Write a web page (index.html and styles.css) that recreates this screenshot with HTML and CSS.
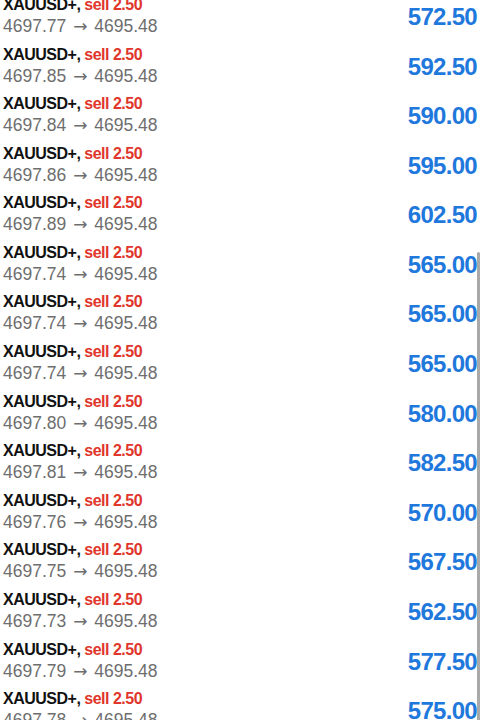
FILE: index.html
```html
<!DOCTYPE html>
<html>
<head>
    <meta charset="utf-8">
    <meta name="viewport" content="width=device-width, initial-scale=1">
    <title>Deals</title>
    <link rel="stylesheet" href="styles.css">
</head>
<body>
    <!-- closed deals, scrolled part way down -->
    <div class="deals">
        <div class="deal">
            <div class="info">
                <p class="title">XAUUSD+, <span class="side">sell 2.50</span></p>
                <p class="prices">4697.77 <span class="arrow">&rarr;</span> 4695.48</p>
            </div>
            <span class="profit">572.50</span>
        </div>
        <div class="deal">
            <div class="info">
                <p class="title">XAUUSD+, <span class="side">sell 2.50</span></p>
                <p class="prices">4697.85 <span class="arrow">&rarr;</span> 4695.48</p>
            </div>
            <span class="profit">592.50</span>
        </div>
        <div class="deal">
            <div class="info">
                <p class="title">XAUUSD+, <span class="side">sell 2.50</span></p>
                <p class="prices">4697.84 <span class="arrow">&rarr;</span> 4695.48</p>
            </div>
            <span class="profit">590.00</span>
        </div>
        <div class="deal">
            <div class="info">
                <p class="title">XAUUSD+, <span class="side">sell 2.50</span></p>
                <p class="prices">4697.86 <span class="arrow">&rarr;</span> 4695.48</p>
            </div>
            <span class="profit">595.00</span>
        </div>
        <div class="deal">
            <div class="info">
                <p class="title">XAUUSD+, <span class="side">sell 2.50</span></p>
                <p class="prices">4697.89 <span class="arrow">&rarr;</span> 4695.48</p>
            </div>
            <span class="profit">602.50</span>
        </div>
        <div class="deal">
            <div class="info">
                <p class="title">XAUUSD+, <span class="side">sell 2.50</span></p>
                <p class="prices">4697.74 <span class="arrow">&rarr;</span> 4695.48</p>
            </div>
            <span class="profit">565.00</span>
        </div>
        <div class="deal">
            <div class="info">
                <p class="title">XAUUSD+, <span class="side">sell 2.50</span></p>
                <p class="prices">4697.74 <span class="arrow">&rarr;</span> 4695.48</p>
            </div>
            <span class="profit">565.00</span>
        </div>
        <div class="deal">
            <div class="info">
                <p class="title">XAUUSD+, <span class="side">sell 2.50</span></p>
                <p class="prices">4697.74 <span class="arrow">&rarr;</span> 4695.48</p>
            </div>
            <span class="profit">565.00</span>
        </div>
        <div class="deal">
            <div class="info">
                <p class="title">XAUUSD+, <span class="side">sell 2.50</span></p>
                <p class="prices">4697.80 <span class="arrow">&rarr;</span> 4695.48</p>
            </div>
            <span class="profit">580.00</span>
        </div>
        <div class="deal">
            <div class="info">
                <p class="title">XAUUSD+, <span class="side">sell 2.50</span></p>
                <p class="prices">4697.81 <span class="arrow">&rarr;</span> 4695.48</p>
            </div>
            <span class="profit">582.50</span>
        </div>
        <div class="deal">
            <div class="info">
                <p class="title">XAUUSD+, <span class="side">sell 2.50</span></p>
                <p class="prices">4697.76 <span class="arrow">&rarr;</span> 4695.48</p>
            </div>
            <span class="profit">570.00</span>
        </div>
        <div class="deal">
            <div class="info">
                <p class="title">XAUUSD+, <span class="side">sell 2.50</span></p>
                <p class="prices">4697.75 <span class="arrow">&rarr;</span> 4695.48</p>
            </div>
            <span class="profit">567.50</span>
        </div>
        <div class="deal">
            <div class="info">
                <p class="title">XAUUSD+, <span class="side">sell 2.50</span></p>
                <p class="prices">4697.73 <span class="arrow">&rarr;</span> 4695.48</p>
            </div>
            <span class="profit">562.50</span>
        </div>
        <div class="deal">
            <div class="info">
                <p class="title">XAUUSD+, <span class="side">sell 2.50</span></p>
                <p class="prices">4697.79 <span class="arrow">&rarr;</span> 4695.48</p>
            </div>
            <span class="profit">577.50</span>
        </div>
        <div class="deal">
            <div class="info">
                <p class="title">XAUUSD+, <span class="side">sell 2.50</span></p>
                <p class="prices">4697.78 <span class="arrow">&rarr;</span> 4695.48</p>
            </div>
            <span class="profit">575.00</span>
        </div>
    </div>

    <!-- scroll indicator -->
    <div class="scroll_bar"></div>
</body>
</html>
```

FILE: styles.css
```css
:root {
    --ink:   #111111;
    --red:   #e0362c;
    --grey:  #6e6e6e;
    --blue:  #1f78dc;
    --thumb: #a9a9a9;
}

html, body {
    height: 100%;
    overflow: hidden;
}

body {
    margin: 0;
    background-color: #ffffff;
    font-family: "Liberation Sans", Arial, sans-serif;
}

p {
    margin: 0;
}

.deals {
    margin-top: -7.9px;
}

.deal {
    height: 49.6px;
    padding: 0 6px 0 3px;

    display: flex;
    align-items: center;
    justify-content: space-between;
}

.title {
    font-size: 16px;
    font-weight: bold;
    letter-spacing: -0.5px;
    line-height: 18px;
    color: var( --ink );
}

.side {
    color: var( --red );
}

.prices {
    font-size: 17.5px;
    line-height: 24px;
    color: var( --grey );
}

.arrow {
    margin: 0 2px;
    font-family: "DejaVu Sans", sans-serif;
    font-size: 17px;
}

.profit {
    font-size: 24px;
    font-weight: bold;
    letter-spacing: -0.7px;
    color: var( --blue );
}

.scroll_bar {
    position: absolute;
    top: 252px;
    bottom: 0;
    left: 477px;
    width: 3px;

    border-radius: 2px 2px 0 0;
    background-color: var( --thumb );
}
```
